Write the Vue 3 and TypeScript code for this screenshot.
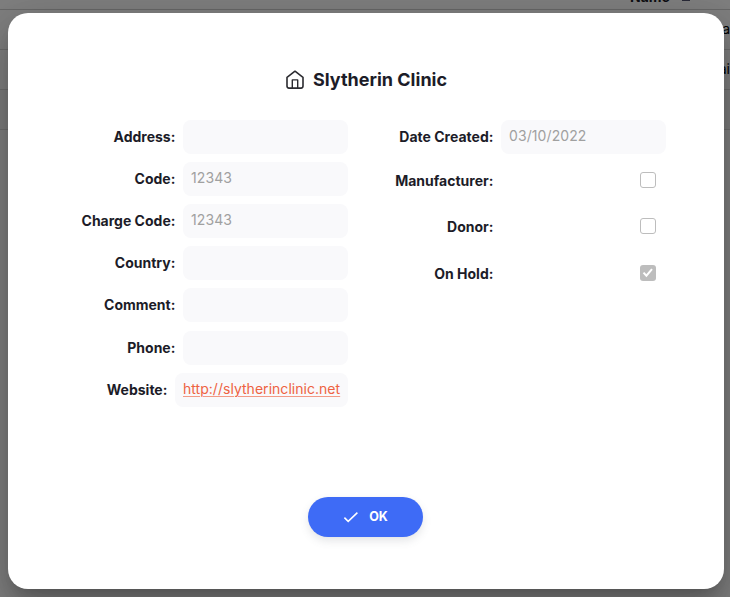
<script setup lang="ts">
interface Field {
  label: string
  value?: string
  link?: boolean
}

interface Flag {
  label: string
  checked: boolean
}

const name = 'Slytherin Clinic'

const fields: Field[] = [
  { label: 'Address:' },
  { label: 'Code:', value: '12343' },
  { label: 'Charge Code:', value: '12343' },
  { label: 'Country:' },
  { label: 'Comment:' },
  { label: 'Phone:' },
  { label: 'Website:', value: 'http://slytherinclinic.net', link: true },
]

const flags: Flag[] = [
  { label: 'Manufacturer:', checked: false },
  { label: 'Donor:', checked: false },
  { label: 'On Hold:', checked: true },
]

const tableRows: string[] = ['a', 'ai', '']
</script>

<template>
  <div class="page">
    <div class="table">
      <div class="table-head">
        <span>Name</span>
        <svg width="8" height="8" viewBox="0 0 8 8"><path d="M0 .5h8M0 3.5h8M0 6.5h8" stroke="#555770" stroke-width="1.2" /></svg>
      </div>
      <div v-for="(row, i) in tableRows" :key="i" class="table-row">{{ row }}</div>
    </div>

    <div class="backdrop">
      <div class="dialog" role="dialog">
        <header class="title">
          <svg width="20" height="20" viewBox="0 0 20 20" fill="none" stroke="#2b2b30" stroke-linejoin="round">
            <path d="M2 7.3 10 1.2l8 6.1v8.8a2 2 0 0 1-2 2H4a2 2 0 0 1-2-2z" stroke-width="1.6" />
            <path d="M7.3 18V9.9h5.4V18" stroke-width="1.4" />
          </svg>
          <h1>{{ name }}</h1>
        </header>

        <div class="columns">
          <div class="column">
            <div v-for="field in fields" :key="field.label" class="row">
              <label>{{ field.label }}</label>
              <div class="box" :class="{ 'box-link': field.link }">
                <a v-if="field.link">{{ field.value }}</a>
                <span v-else>{{ field.value }}</span>
              </div>
            </div>
          </div>

          <div class="column column-right">
            <div class="row">
              <label>Date Created:</label>
              <div class="box"><span>03/10/2022</span></div>
            </div>
            <div v-for="flag in flags" :key="flag.label" class="row flag">
              <label>{{ flag.label }}</label>
              <div class="flag-cell">
                <span class="check" :class="{ checked: flag.checked }">
                  <svg v-if="flag.checked" width="16" height="16" viewBox="0 0 16 16" fill="none">
                    <path d="m3.5 7.6 2.9 3.1 5.6-6.6" stroke="#fff" stroke-width="2" />
                  </svg>
                </span>
              </div>
            </div>
          </div>
        </div>

        <footer class="actions">
          <button type="button" class="ok">
            <svg width="16" height="14" viewBox="0 0 16 14" fill="none">
              <path d="m1.4 7.6 3.8 3.8 9.2-8.8" stroke="#fff" stroke-width="1.5" />
            </svg>
            <span>OK</span>
          </button>
        </footer>
      </div>
    </div>
  </div>
</template>

<style>
body {
  margin: 0;
  overflow: hidden;
}
</style>

<style scoped>
.page {
  position: relative;
  width: 730px;
  height: 597px;
  overflow: hidden;
  background: #fff;
  color: #1c1c28;
  font-family: Inter, sans-serif;
}

.table-head {
  display: flex;
  align-items: flex-end;
  gap: 12px;
  box-sizing: border-box;
  height: 10px;
  padding: 0 0 3px 630px;
  border-bottom: 1px solid #d0d0d0;
  font-size: 14px;
  font-weight: 700;
  line-height: 18px;
}

.table-head svg {
  margin-bottom: 4px;
}

.table-row {
  box-sizing: border-box;
  height: 40px;
  border-bottom: 1px solid #dcdcdc;
  color: #000;
  font-size: 14px;
  line-height: 38px;
  text-align: right;
}

.table-row:nth-child(4) {
  background: #f8f8f8;
}

.backdrop {
  position: absolute;
  inset: 0;
  box-sizing: border-box;
  padding: 13px 6px 8px 8px;
  background: rgba(0, 0, 0, 0.5);
}

.dialog {
  display: flex;
  flex-direction: column;
  box-sizing: border-box;
  width: 716px;
  height: 576px;
  padding-top: 53px;
  border-radius: 20px;
  background: #fff;
  box-shadow: 0 11px 15px -7px rgba(0, 0, 0, 0.2), 0 24px 38px 3px rgba(0, 0, 0, 0.14), 0 9px 46px 8px rgba(0, 0, 0, 0.12);
}

.title {
  display: flex;
  align-items: center;
  justify-content: center;
  gap: 8px;
  height: 27px;
}

h1 {
  margin: 0;
  font-size: 18px;
  font-weight: 700;
  line-height: 27px;
}

.columns {
  display: flex;
  gap: 30px;
  padding: 27px 58px 0 60px;
}

.column {
  display: flex;
  flex-direction: column;
  gap: 8.12px;
  width: 280px;
}

.column-right {
  width: 288px;
  gap: 0;
}

.row {
  display: flex;
  align-items: center;
  justify-content: flex-end;
  gap: 8px;
  height: 34px;
}

label {
  margin-right: -0.4px;
  font-size: 14px;
  font-weight: 700;
  line-height: 20px;
}

.box {
  box-sizing: border-box;
  flex: none;
  width: 165px;
  height: 34px;
  padding: 6px 8px;
  border-radius: 8px;
  background: #f9f9fb;
  color: #a0a0a0;
  font-size: 14px;
  letter-spacing: 0.09px;
  line-height: 20px;
  white-space: nowrap;
}

.box-link {
  width: 173px;
}

.box a {
  color: #ee6242;
  letter-spacing: 0.03px;
  text-decoration: underline;
  text-decoration-color: rgba(236, 90, 56, 0.6);
  text-decoration-thickness: 1px;
  text-underline-offset: 2px;
}

.flag {
  height: 46.3px;
}

.column-right .row:first-child {
  margin-bottom: 4px;
}

.flag-cell {
  display: flex;
  flex: none;
  justify-content: flex-end;
  box-sizing: border-box;
  width: 165px;
  padding: 0 10px 2px 0;
}

.check {
  box-sizing: border-box;
  width: 16px;
  height: 16px;
  border: 1px solid #bdbdbd;
  border-radius: 3px;
}

.checked {
  border: 0;
  background: #bdbdbd;
}

.check svg {
  display: block;
}

.actions {
  display: flex;
  justify-content: center;
  margin-top: auto;
  padding: 0 1px 52px 0;
}

.ok {
  display: flex;
  align-items: center;
  justify-content: center;
  gap: 10px;
  width: 115px;
  height: 40px;
  padding: 0;
  border: 0;
  border-radius: 20px;
  background: #3e6bf6;
  box-shadow: 0 4px 8px rgba(96, 97, 112, 0.16), 0 0 2px rgba(40, 41, 61, 0.04);
  color: #fff;
  font-family: Inter, sans-serif;
  font-size: 12.5px;
  font-weight: 700;
}

.ok span {
  padding-bottom: 1px;
}
</style>
